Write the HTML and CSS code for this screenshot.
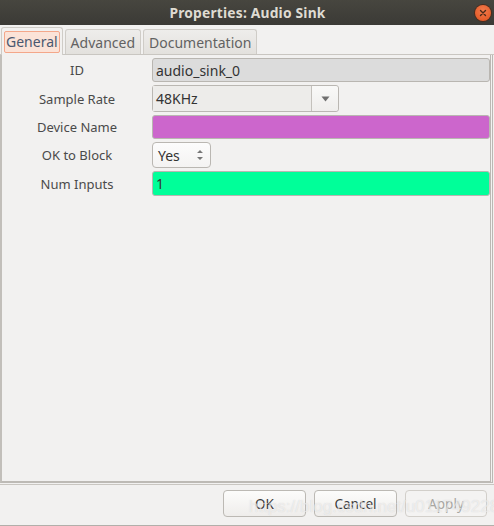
FILE: index.html
```html
<!DOCTYPE html>
<html>
<head>
<meta charset="utf-8">
<link rel="stylesheet" href="styles.css">
</head>
<body>
<div class="window">
  <div class="titlebar">
    <div class="title">Properties: Audio Sink</div>
    <div class="close"><svg width="16" height="16" viewBox="0 0 16 16"><path d="M5.5 5.5 L10.5 10.5 M10.5 5.5 L5.5 10.5" stroke="#4a2a1a" stroke-width="1.4" stroke-linecap="round"/></svg></div>
  </div>
  <div class="tabs">
    <div class="tab active"><span class="focus">General</span></div>
    <div class="tab">Advanced</div>
    <div class="tab">Documentation</div>
  </div>
  <div class="pane">
    <div class="form">
      <div class="label">ID</div>
      <div class="entry disabled h24">audio_sink_0</div>
      <div class="label">Sample Rate</div>
      <div class="combo"><div class="combo-text">48KHz</div><div class="combo-btn"><svg width="9" height="6" viewBox="0 0 9 6"><path d="M0.5 0.5 H8.5 L4.5 5.5 Z" fill="#6f6f6f"/></svg></div></div>
      <div class="label">Device Name</div>
      <div class="entry magenta h24"></div>
      <div class="label">OK to Block</div>
      <div class="spin"><span>Yes</span><svg width="8" height="14" viewBox="0 0 8 14"><path d="M1 5 L4 2 L7 5 Z M1 9 L4 12 L7 9 Z" fill="#777"/></svg></div>
      <div class="label">Num Inputs</div>
      <div class="entry green h25">1</div>
    </div>
  </div>
  <div class="footer">
    <button class="btn">OK</button>
    <button class="btn">Cancel</button>
    <button class="btn insensitive">Apply</button>
    <div class="watermark">https://blog.csdn.net/u011749228</div>
  </div>
</div>
</body>
</html>
```
FILE: styles.css
```css
* { box-sizing: border-box; }
html, body { margin: 0; padding: 0; }
body {
  width: 494px;
  height: 526px;
  background: #f2f1f0;
  font-family: "Noto Sans", "DejaVu Sans", sans-serif;
  overflow: hidden;
}
.window { width: 494px; height: 526px; display: flex; flex-direction: column; }
.titlebar {
  height: 25px;
  background: linear-gradient(#47463f, #3b3a36);
  display: flex;
  align-items: center;
  padding-left: 20px;
}
.title {
  flex: 1;
  text-align: center;
  color: #dfdbd2;
  font-weight: bold;
  font-size: 13.8px;
  letter-spacing: 0.2px;
}
.close {
  width: 16px; height: 16px;
  margin-right: 3px;
  border-radius: 50%;
  background: radial-gradient(circle at 50% 35%, #f37b4c, #e0511d);
  box-shadow: 0 0 0 1px #4c2b1c;
  display: flex;
}
.tabs {
  height: 30px;
  display: flex;
  align-items: flex-end;
  padding-left: 1px;
  gap: 2px;
  border-bottom: 1px solid #c9c6c1;
}
.tab {
  height: 25px;
  padding: 0 5px;
  border: 1px solid #cfccc7;
  border-bottom: none;
  border-radius: 3px 3px 0 0;
  background: linear-gradient(#eeedeb, #e3e1dd);
  color: #626262;
  font-size: 14px;
  display: flex;
  align-items: center;
}
.tab.active {
  height: 28px;
  padding: 0 2px;
  background: #f2f1f0;
  margin-bottom: -1px;
  color: #4a5870;
}
.tab.active .focus {
  border: 1px solid #f4a78a;
  background: #fbe3d8;
  border-radius: 2px;
  padding: 1px 1px;
  line-height: 18px;
}
.pane {
  flex: 0 0 auto;
  height: 428px;
  margin-right: 1px;
  border-left: 2px solid #c2bfba;
  border-right: 3px double #bbb8b3;
  border-bottom: 2px solid #bdbab5;
}
.form {
  display: grid;
  grid-template-columns: 150px 1fr;
  row-gap: 3px;
  padding-top: 3px;
  align-items: center;
}
.label {
  text-align: center;
  color: #4a4a4a;
  font-size: 13px;
}
.entry {
  border: 1px solid #b9b6b1;
  border-radius: 3px;
  font-size: 14px;
  color: #333;
  padding-left: 3px;
  display: flex;
  align-items: center;
}
.h24 { height: 24px; }
.h25 { height: 25px; }
.disabled { background: #dcdcdc; }
.magenta { background: #cc66cc; }
.green { background: #00ff99; }
.combo {
  width: 187px;
  height: 27px;
  display: flex;
  border: 1px solid #bab7b2;
  border-radius: 3px;
}
.combo-text {
  flex: 1;
  background: #edecea;
  border-right: 1px solid #c4c1bc;
  font-size: 14px;
  color: #333;
  padding-left: 3px;
  display: flex;
  align-items: center;
}
.combo-btn {
  width: 26px;
  background: linear-gradient(#f9f9f8, #efeeec);
  display: flex;
  align-items: center;
  justify-content: center;
  border-radius: 0 3px 3px 0;
}
.spin {
  width: 59px;
  height: 26px;
  border: 1px solid #bab7b2;
  border-radius: 4px;
  background: linear-gradient(#fcfcfc, #f4f3f2);
  display: flex;
  align-items: center;
  justify-content: space-between;
  padding: 0 6px 0 5px;
  font-size: 14px;
  color: #333;
}
.footer {
  position: relative;
  flex: 1;
  border-top: 1px solid #c9c6c1;
  margin-top: 1px;
  border-bottom: 1px solid #b2afaa;
  display: flex;
  justify-content: flex-end;
  align-items: flex-start;
  padding: 5px 7px 0 0;
  gap: 8px;
}
.btn {
  width: 83px;
  height: 27px;
  border: 1px solid #bcb9b4;
  border-radius: 4px;
  background: linear-gradient(#fcfcfb, #efedeb);
  font-family: inherit;
  font-size: 13.5px;
  color: #3c3c3c;
  padding: 0;
}
.btn.insensitive { color: #a8a6a2; background: #f4f3f2; border-color: #d2cfca; width: 82px; }
.watermark {
  position: absolute;
  left: 249px;
  top: 12px;
  font-family: "Liberation Sans", sans-serif;
  font-size: 17px;
  color: rgba(255,255,255,0.55);
  text-shadow: 0 0 1px rgba(150,150,150,0.35);
  pointer-events: none;
  white-space: nowrap;
}
```
